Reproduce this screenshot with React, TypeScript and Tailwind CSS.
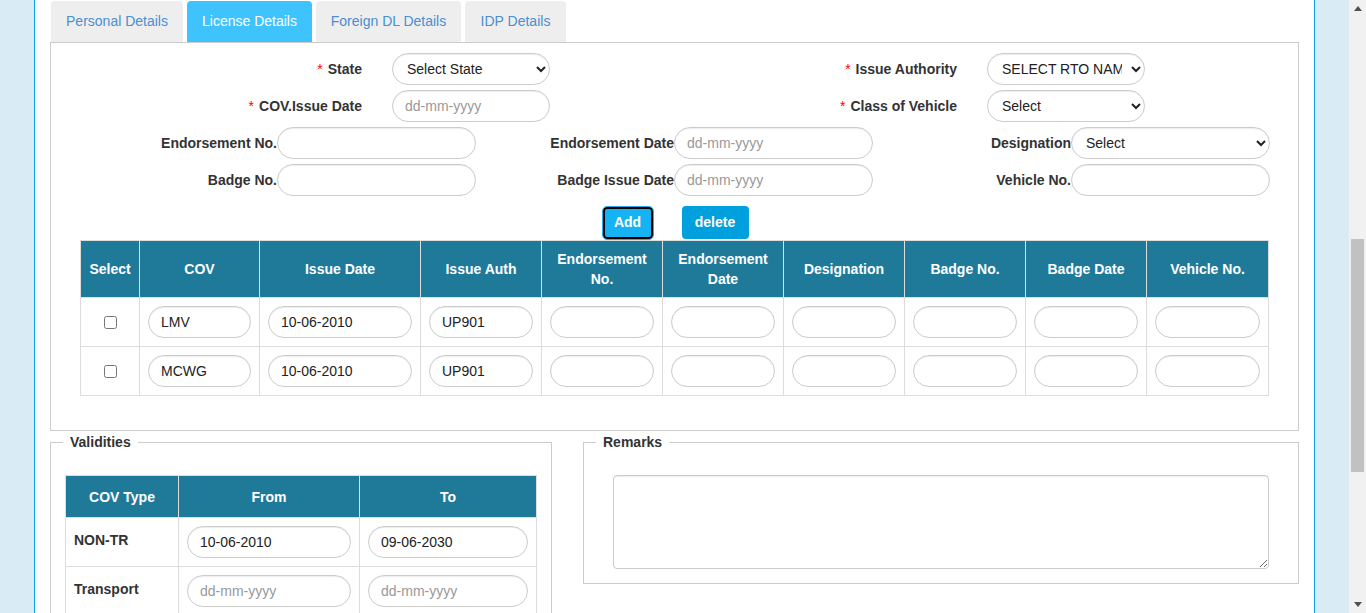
import React from "react";

const inputCls =
  "h-[32px] rounded-full border border-[#ccc] bg-white pl-[12px] pr-2 text-[14px] text-[#222] shadow-[inset_0_1px_1px_rgba(0,0,0,0.075)] outline-none placeholder:text-[#999]";
const selectCls =
  "h-[32px] rounded-full border border-[#ccc] bg-white pl-[10px] pr-[6px] text-[14px] text-[#222] shadow-[inset_0_1px_1px_rgba(0,0,0,0.075)] outline-none";
const labelCls = "text-[14px] font-bold text-[#333] leading-[20px]";

/* ---------- form pieces ---------- */
const HalfField: React.FC<{ label: string; children: React.ReactNode }> = ({ label, children }) => (
  <div className="flex w-[595px] items-center">
    <div className={`w-[298px] pr-[15px] text-right ${labelCls}`}>
      <span className="mr-[5px] font-normal text-[#f00]">*</span>
      {label}
    </div>
    <div className="pl-[15px]">{children}</div>
  </div>
);

const ThirdField: React.FC<{ label: string; children: React.ReactNode }> = ({ label, children }) => (
  <div className="flex w-[397px] items-center">
    <div className={`w-[198px] text-right ${labelCls}`}>{label}</div>
    {children}
  </div>
);

const rows = [
  { cov: "LMV", date: "10-06-2010", auth: "UP901" },
  { cov: "MCWG", date: "10-06-2010", auth: "UP901" },
];

const heads = [
  "Select",
  "COV",
  "Issue Date",
  "Issue Auth",
  "Endorsement No.",
  "Endorsement Date",
  "Designation",
  "Badge No.",
  "Badge Date",
  "Vehicle No.",
];

const thCls = "border border-[#ddd] bg-[#1f7a9a] px-2 py-2 text-center text-[14px] font-bold leading-[20px] text-white";
const tdCls = "border border-[#ddd] px-2 align-middle";

const CovTable: React.FC = () => (
  <table className="ml-[29px] mt-[1px] w-[1188px] table-fixed border-collapse">
    <colgroup>
      <col className="w-[59px]" />
      <col className="w-[120px]" />
      <col className="w-[161px]" />
      <col className="w-[121px]" />
      <col className="w-[121px]" />
      <col className="w-[121px]" />
      <col className="w-[121px]" />
      <col className="w-[121px]" />
      <col className="w-[121px]" />
      <col className="w-[122px]" />
    </colgroup>
    <thead>
      <tr className="h-[56px]">
        {heads.map((h) => (
          <th key={h} className={thCls}>
            {h}
          </th>
        ))}
      </tr>
    </thead>
    <tbody>
      {rows.map((r) => (
        <tr key={r.cov} className="h-[49px]">
          <td className={`${tdCls} text-center`}>
            <input type="checkbox" className="h-[13px] w-[13px] align-middle" />
          </td>
          <td className={tdCls}>
            <input className={`${inputCls} w-full`} defaultValue={r.cov} />
          </td>
          <td className={tdCls}>
            <input className={`${inputCls} w-full`} defaultValue={r.date} />
          </td>
          <td className={tdCls}>
            <input className={`${inputCls} w-full`} defaultValue={r.auth} />
          </td>
          {[0, 1, 2, 3, 4, 5].map((i) => (
            <td key={i} className={tdCls}>
              <input className={`${inputCls} w-full`} />
            </td>
          ))}
        </tr>
      ))}
    </tbody>
  </table>
);

/* ---------- fake browser scrollbar ---------- */
const Scrollbar: React.FC = () => (
  <div className="flex h-full w-[17px] flex-col bg-[#f1f1f1]">
    <div className="flex h-[17px] items-center justify-center">
      <svg width="8" height="5" viewBox="0 0 8 5">
        <path d="M0 5 L4 0 L8 5 Z" fill="#505050" />
      </svg>
    </div>
    <div className="mx-[2px] mt-[222px] h-[233px] bg-[#c1c1c1]" />
    <div className="flex-1" />
    <div className="flex h-[17px] items-center justify-center">
      <svg width="8" height="5" viewBox="0 0 8 5">
        <path d="M0 0 L8 0 L4 5 Z" fill="#505050" />
      </svg>
    </div>
  </div>
);

const tabs = [
  { name: "Personal Details", w: "w-[132px]" },
  { name: "License Details", w: "w-[125px]" },
  { name: "Foreign DL Details", w: "w-[145px]" },
  { name: "IDP Details", w: "w-[101px]" },
];

export default function App() {
  return (
    <div className="flex h-[613px] w-[1366px] overflow-hidden bg-[#d9ecf6] font-['Liberation_Sans',Arial,sans-serif]">
      <div className="w-[34px] shrink-0" />

      {/* page body */}
      <div className="w-[1281px] shrink-0 border-x border-[#0ba2e2] bg-white px-[15px] pt-[1px]">
        {/* tabs */}
        <div className="flex h-[41px] gap-[4px] pl-[1px]">
          {tabs.map((t) => (
            <div
              key={t.name}
              className={`flex items-center justify-center rounded-t-[4px] text-[14px] ${t.w} ${
                t.name === "License Details" ? "bg-[#3fc3fd] text-white" : "bg-[#eee] text-[#4a8fd0]"
              }`}
            >
              {t.name}
            </div>
          ))}
        </div>

        {/* tab content */}
        <div className="h-[389px] border border-[#ccc] pt-[10px]">
          <div className="flex flex-col gap-[5px] pl-[28px]">
            <div className="flex h-[32px]">
              <HalfField label="State">
                <select className={`${selectCls} w-[158px]`}>
                  <option>Select State</option>
                </select>
              </HalfField>
              <HalfField label="Issue Authority">
                <select className={`${selectCls} w-[158px]`}>
                  <option>SELECT RTO NAME</option>
                </select>
              </HalfField>
            </div>
            <div className="flex h-[32px]">
              <HalfField label="COV.Issue Date">
                <input className={`${inputCls} w-[158px]`} placeholder="dd-mm-yyyy" />
              </HalfField>
              <HalfField label="Class of Vehicle">
                <select className={`${selectCls} w-[158px]`}>
                  <option>Select</option>
                </select>
              </HalfField>
            </div>
            <div className="flex h-[32px]">
              <ThirdField label="Endorsement No.">
                <input className={`${inputCls} w-[199px]`} />
              </ThirdField>
              <ThirdField label="Endorsement Date">
                <input className={`${inputCls} w-[199px]`} placeholder="dd-mm-yyyy" />
              </ThirdField>
              <ThirdField label="Designation">
                <select className={`${selectCls} w-[199px]`}>
                  <option>Select</option>
                </select>
              </ThirdField>
            </div>
            <div className="flex h-[32px]">
              <ThirdField label="Badge No.">
                <input className={`${inputCls} w-[199px]`} />
              </ThirdField>
              <ThirdField label="Badge Issue Date">
                <input className={`${inputCls} w-[199px]`} placeholder="dd-mm-yyyy" />
              </ThirdField>
              <ThirdField label="Vehicle No.">
                <input className={`${inputCls} w-[199px]`} />
              </ThirdField>
            </div>
          </div>

          <div className="mt-[10px] flex items-center justify-center gap-[29px] pl-[2px]">
            <button className="h-[32px] w-[50px] rounded-[4px] border-2 border-black bg-[#15b3f4] text-[14px] font-bold text-white outline outline-1 outline-[#2aa9ec]">
              Add
            </button>
            <button className="h-[33px] w-[67px] rounded-[4px] bg-[#00a0df] text-[14px] font-bold text-white">
              delete
            </button>
          </div>

          <CovTable />
        </div>

        {/* validities + remarks */}
        <div className="mt-[1px] flex gap-[31px]">
          <fieldset className="w-[502px] shrink-0 border border-[#ccc] pl-[12px]">
            <legend className={`px-[7px] ${labelCls}`}>Validities</legend>
            <table className="ml-[2px] mt-[23px] w-[471px] table-fixed border-collapse">
              <colgroup>
                <col className="w-[113px]" />
                <col className="w-[181px]" />
                <col className="w-[177px]" />
              </colgroup>
              <thead>
                <tr className="h-[42px]">
                  <th className={thCls}>COV Type</th>
                  <th className={thCls}>From</th>
                  <th className={thCls}>To</th>
                </tr>
              </thead>
              <tbody>
                <tr className="h-[49px]">
                  <td className={`${tdCls} align-top pt-[12px] text-[14px] font-bold text-[#333]`}>NON-TR</td>
                  <td className={tdCls}>
                    <input className={`${inputCls} w-full`} defaultValue="10-06-2010" />
                  </td>
                  <td className={tdCls}>
                    <input className={`${inputCls} w-full`} defaultValue="09-06-2030" />
                  </td>
                </tr>
                <tr className="h-[49px]">
                  <td className={`${tdCls} align-top pt-[12px] text-[14px] font-bold text-[#333]`}>Transport</td>
                  <td className={tdCls}>
                    <input className={`${inputCls} w-full`} placeholder="dd-mm-yyyy" />
                  </td>
                  <td className={tdCls}>
                    <input className={`${inputCls} w-full`} placeholder="dd-mm-yyyy" />
                  </td>
                </tr>
              </tbody>
            </table>
          </fieldset>

          <fieldset className="h-[152px] w-[716px] shrink-0 border border-[#ccc] pl-[12px]">
            <legend className={`px-[7px] ${labelCls}`}>Remarks</legend>
            <textarea className="ml-[17px] mt-[23px] block h-[94px] w-[656px] rounded-[4px] border border-[#ccc] shadow-[inset_0_1px_1px_rgba(0,0,0,0.075)] outline-none" />
          </fieldset>
        </div>
      </div>

      <div className="w-[34px] shrink-0" />
      <Scrollbar />
    </div>
  );
}
